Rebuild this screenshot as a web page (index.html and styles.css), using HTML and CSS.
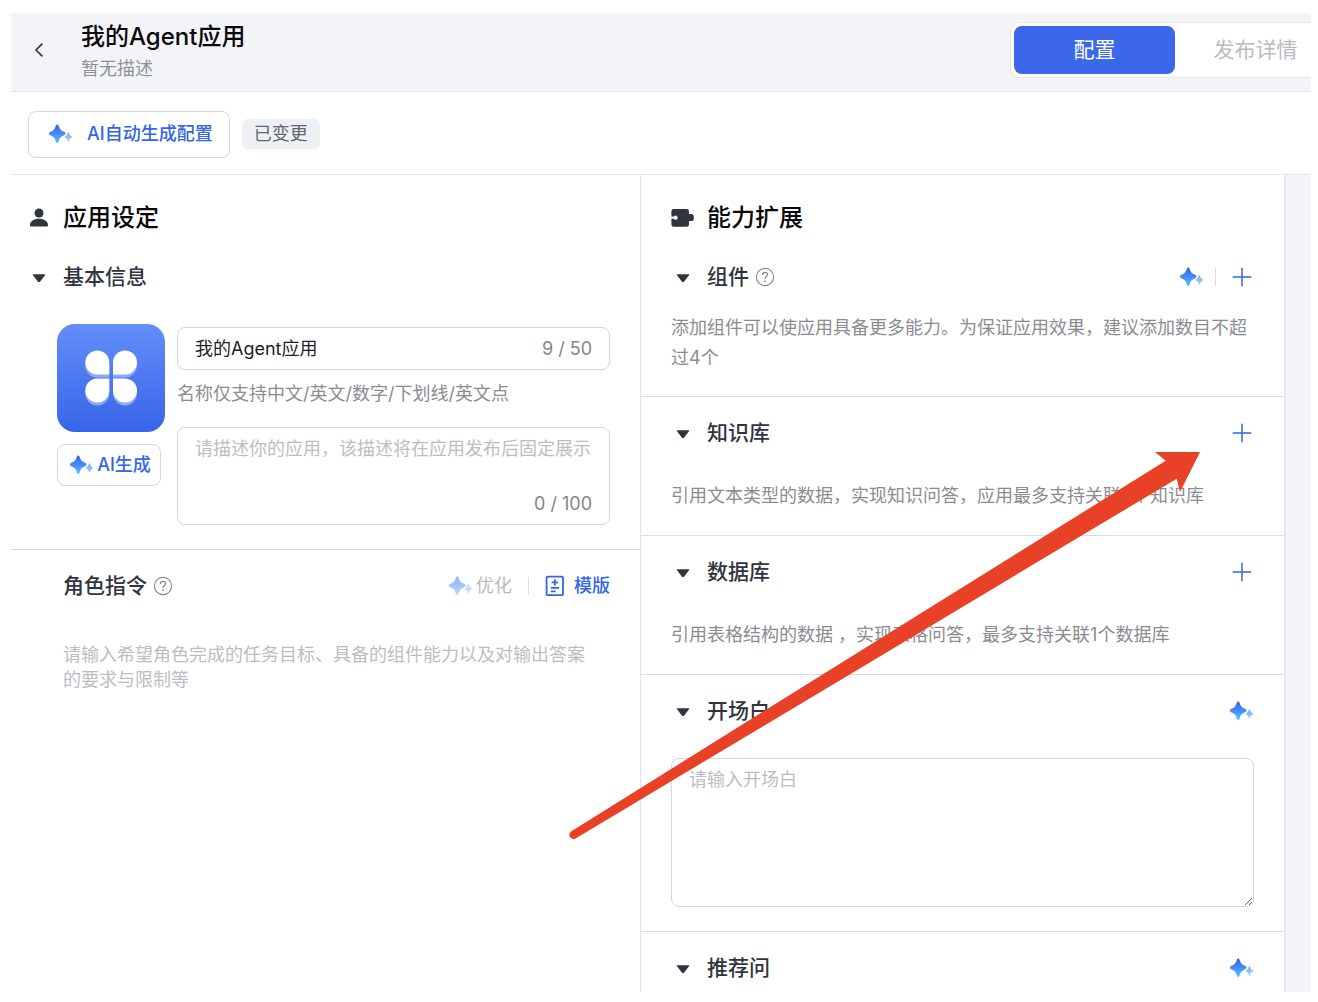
FILE: index.html
```html
<!DOCTYPE html>
<html lang="zh-CN">
<head>
<meta charset="utf-8">
<meta name="viewport" content="width=device-width, initial-scale=1">
<title>我的Agent应用</title>
<link rel="stylesheet" href="styles.css">
</head>
<body>
<svg class="sprite" aria-hidden="true">
  <defs>
    <linearGradient id="spark-big" x1="0" y1="0" x2="0" y2="1">
      <stop offset="0.1" stop-color="#3a66f0"/>
      <stop offset="0.55" stop-color="#4790fb"/>
      <stop offset="1" stop-color="#55c8fb"/>
    </linearGradient>
    <linearGradient id="spark-small" x1="0" y1="0" x2="0" y2="1">
      <stop offset="0" stop-color="#86a6f8"/>
      <stop offset="1" stop-color="#93d2fc"/>
    </linearGradient>
    <linearGradient id="tile-bg" x1="0" y1="0" x2="0" y2="1">
      <stop offset="0" stop-color="#628ef9"/>
      <stop offset="1" stop-color="#3765e9"/>
    </linearGradient>
  </defs>
  <symbol id="spark" viewBox="0 0 24 20">
    <path fill="url(#spark-big)" d="M8.2 0.4C9 .4 9.4 1 9.7 2C10.5 5 11.8 6.6 14.6 7.6C15.8 8.1 16.5 8.7 16.5 9.6C16.5 10.5 15.8 11.1 14.6 11.6C11.8 12.6 10.5 14.2 9.7 17.2C9.4 18.3 9 18.9 8.2 18.9C7.4 18.9 7 18.3 6.7 17.2C5.9 14.2 4.6 12.6 1.8 11.6C.6 11.1-.1 10.5-.1 9.6C-.1 8.7.6 8.1 1.8 7.6C4.6 6.6 5.9 5 6.7 2C7 1 7.4 .4 8.2 .4Z"/>
    <path fill="url(#spark-small)" d="M19.4 8.3C20 8.3 20.1 9 20.3 9.8C20.6 10.9 21.1 11.5 22.1 11.9C22.7 12.1 23.1 12.4 23.1 12.9C23.1 13.4 22.7 13.7 22.1 13.9C21.1 14.3 20.6 14.9 20.3 16C20.1 16.9 20 17.6 19.4 17.6C18.8 17.6 18.7 16.9 18.5 16C18.2 14.9 17.7 14.3 16.7 13.9C16.1 13.7 15.7 13.4 15.7 12.9C15.7 12.4 16.1 12.1 16.7 11.9C17.7 11.5 18.2 10.9 18.5 9.8C18.7 9 18.8 8.3 19.4 8.3Z"/>
  </symbol>
  <symbol id="plus" viewBox="0 0 20 20">
    <path d="M10 .7V19.3M.7 10H19.3" fill="none" stroke="#3465e8" stroke-width="1.5"/>
  </symbol>
  <symbol id="caret" viewBox="0 0 24 24">
    <path d="M6.3 9.2H17.7Q18.8 9.3 18 10.3L13 16.7Q12 17.6 11 16.7L6 10.3Q5.2 9.3 6.3 9.2Z" fill="#30343f"/>
  </symbol>
  <symbol id="help" viewBox="0 0 20 20">
    <circle cx="10" cy="10" r="8.6" fill="none" stroke="#84868c" stroke-width="1.1"/>
    <path d="M7.4 7.9C7.4 6.3 8.5 5.3 10 5.3C11.5 5.3 12.6 6.2 12.6 7.6C12.6 9.4 10 9.7 10 11.7V12" fill="none" stroke="#84868c" stroke-width="1.2"/>
    <circle cx="10" cy="14.2" r=".85" fill="#84868c"/>
  </symbol>
</svg>

<div class="app">
  <header class="topbar">
    <button class="icon-btn back" type="button" aria-label="返回">
      <svg width="12" height="16" viewBox="0 0 12 16"><path d="M9.4 1.6L3 8L9.4 14.4" fill="none" stroke="#30343f" stroke-width="1.6"/></svg>
    </button>
    <div class="identity">
      <h1 class="app-name">我的Agent应用</h1>
      <p class="app-desc">暂无描述</p>
    </div>
    <nav class="tabs">
      <button class="tab tab-active" type="button">配置</button>
      <button class="tab" type="button">发布详情</button>
    </nav>
  </header>

  <div class="toolbar">
    <button class="outline-btn generate" type="button"><svg class="spark"><use href="#spark"/></svg>AI自动生成配置</button>
    <span class="badge">已变更</span>
  </div>

  <main class="columns">
    <section class="column settings">
      <h2 class="row column-title">
        <svg class="lead" viewBox="0 0 24 24"><circle cx="12" cy="7" r="4.5" fill="#30343f"/><path d="M3 19.2C3 15.4 7 12.8 12 12.8C17 12.8 21 15.4 21 19.2Q21 20.4 19.8 20.4H4.2Q3 20.4 3 19.2Z" fill="#30343f"/></svg>
        应用设定
      </h2>
      <div class="panel first">
        <h3 class="row panel-title"><svg class="lead"><use href="#caret"/></svg>基本信息</h3>
        <div class="profile">
          <div class="avatar">
            <svg class="tile" viewBox="0 0 108 108" role="img" aria-label="应用图标">
              <rect width="108" height="108" rx="18" fill="url(#tile-bg)"/>
              <g fill="#8fabf4">
                <path d="M52.3 53.5H40.3A12 12 0 0 1 28.3 41.5A12 12 0 0 1 52.3 41.5Z"/>
                <path d="M56 53.5H68A12 12 0 0 0 80 41.5A12 12 0 0 0 56 41.5Z"/>
                <path d="M52.3 57.7V69.6A12 12 0 0 1 28.3 69.6A12 12 0 0 1 40.3 57.7Z"/>
                <path d="M56 57.7V69.6A12 12 0 0 0 80 69.6A12 12 0 0 0 68 57.7Z"/>
              </g>
              <g fill="#fff">
                <path d="M52.3 50.5H40.3A12 12 0 0 1 28.3 38.5A12 12 0 0 1 52.3 38.5Z"/>
                <path d="M56 50.5H68A12 12 0 0 0 80 38.5A12 12 0 0 0 56 38.5Z"/>
                <path d="M52.3 54.5V66.5A12 12 0 0 1 28.3 66.5A12 12 0 0 1 40.3 54.5Z"/>
                <path d="M56 54.5V66.5A12 12 0 0 0 80 66.5A12 12 0 0 0 68 54.5Z"/>
              </g>
            </svg>
            <button class="outline-btn avatar-btn" type="button"><svg class="spark"><use href="#spark"/></svg>AI生成</button>
          </div>
          <div class="fields">
            <div class="field name-field">
              <input class="control" type="text" value="我的Agent应用" aria-label="应用名称">
              <span class="count">9 / 50</span>
            </div>
            <p class="hint">名称仅支持中文/英文/数字/下划线/英文点</p>
            <div class="field desc-field">
              <textarea class="control" aria-label="应用描述" placeholder="请描述你的应用，该描述将在应用发布后固定展示"></textarea>
              <span class="count">0 / 100</span>
            </div>
          </div>
        </div>
      </div>
      <div class="panel role">
        <div class="row role-head">
          <h3 class="panel-title">角色指令</h3>
          <svg class="help"><use href="#help"/></svg>
          <div class="actions">
            <button class="text-btn muted" type="button" disabled><svg class="spark"><use href="#spark"/></svg>优化</button>
            <span class="sep"></span>
            <button class="text-btn template" type="button">
              <svg width="20" height="22" viewBox="0 0 20 22" fill="none" stroke="#3465e8" stroke-width="1.8"><rect x="1.6" y="1.6" width="16.4" height="18.6" rx="1"/><path d="M6.6 7.4H13.2M9.9 4.2V10.6M5.8 12.9H14M5.8 16.3H10.6"/></svg>模版
            </button>
          </div>
        </div>
        <textarea class="control role-input" aria-label="角色指令" placeholder="请输入希望角色完成的任务目标、具备的组件能力以及对输出答案的要求与限制等"></textarea>
      </div>
    </section>

    <section class="column abilities">
      <h2 class="row column-title">
        <svg class="lead" viewBox="0 0 24 24"><path d="M2.6 3H15.6Q18 3 18 5.4V8H20.2Q22.8 8 22.8 10.6V12.4Q22.8 15 20.2 15H18V18.4Q18 20.8 15.6 20.8H2.6Q.4 20.8 .4 18.6V12.8H3A2 2 0 1 0 3 10.6H.4V5.2Q.4 3 2.6 3Z" fill="#30343f"/></svg>
        能力扩展
      </h2>
      <div class="panel first">
        <div class="row">
          <svg class="lead"><use href="#caret"/></svg>
          <h3 class="panel-title">组件</h3>
          <svg class="help"><use href="#help"/></svg>
          <div class="actions">
            <button class="icon-btn" type="button" aria-label="AI生成组件"><svg class="spark"><use href="#spark"/></svg></button>
            <span class="sep"></span>
            <button class="icon-btn" type="button" aria-label="添加组件"><svg class="plus"><use href="#plus"/></svg></button>
          </div>
        </div>
        <p class="note note-near">添加组件可以使应用具备更多能力。为保证应用效果，建议添加数目不超过4个</p>
      </div>
      <div class="panel">
        <div class="row">
          <svg class="lead"><use href="#caret"/></svg>
          <h3 class="panel-title">知识库</h3>
          <div class="actions"><button class="icon-btn" type="button" aria-label="添加知识库"><svg class="plus"><use href="#plus"/></svg></button></div>
        </div>
        <p class="note">引用文本类型的数据，实现知识问答，应用最多支持关联5个知识库</p>
      </div>
      <div class="panel">
        <div class="row">
          <svg class="lead"><use href="#caret"/></svg>
          <h3 class="panel-title">数据库</h3>
          <div class="actions"><button class="icon-btn" type="button" aria-label="添加数据库"><svg class="plus"><use href="#plus"/></svg></button></div>
        </div>
        <p class="note">引用表格结构的数据 ，实现表格问答，最多支持关联1个数据库</p>
      </div>
      <div class="panel">
        <div class="row">
          <svg class="lead"><use href="#caret"/></svg>
          <h3 class="panel-title">开场白</h3>
          <div class="actions"><button class="icon-btn" type="button" aria-label="AI生成开场白"><svg class="spark"><use href="#spark"/></svg></button></div>
        </div>
        <textarea class="field control opening" aria-label="开场白" placeholder="请输入开场白"></textarea>
      </div>
      <div class="panel last">
        <div class="row">
          <svg class="lead"><use href="#caret"/></svg>
          <h3 class="panel-title">推荐问</h3>
          <div class="actions"><button class="icon-btn" type="button" aria-label="AI生成推荐问"><svg class="spark"><use href="#spark"/></svg></button></div>
        </div>
      </div>
    </section>
    <aside class="gutter"></aside>
  </main>
</div>

<svg class="arrow" width="632" height="390" viewBox="568 450 632 390" aria-hidden="true">
  <path d="M571 831.4L1165.7 460.7L1155 452H1200L1180 492L1176.7 478.7L576 838.2A4.2 4.2 0 0 1 571 831.4Z" fill="#e94127"/>
</svg>
</body>
</html>
```
FILE: styles.css
```css
* {
  box-sizing: border-box;
}

body {
  position: relative;
  margin: 0;
  padding: 13px 7px 10px 11px;
  min-height: 100vh;
  display: flex;
  background: #fff;
  color: #30343f;
  font: 400 18px/30px Inter, "Noto Sans CJK SC", sans-serif;
}

h1, h2, h3, p {
  margin: 0;
  font-weight: 500;
}

p {
  font-weight: 400;
}

button, input, textarea {
  font: inherit;
  color: inherit;
}

button {
  padding: 0;
  border: 0;
  background: none;
}

svg {
  flex: none;
  display: block;
}

.sprite {
  position: absolute;
  width: 0;
  height: 0;
}

.app {
  flex: 1;
  min-width: 0;
  display: flex;
  flex-direction: column;
  overflow: hidden;
}

/* Top bar */
.topbar {
  display: flex;
  align-items: flex-start;
  height: 79px;
  padding: 9px 0 0 22px;
  background: #f3f4f8;
  border-bottom: 1px solid #e4e5e8;
}

.back {
  padding: 20px 0;
}

.identity {
  flex: 1;
  padding-left: 36px;
}

.app-name {
  font-size: 24px;
  line-height: 30px;
  color: #0a0a0c;
}

.app-desc {
  line-height: 34px;
  color: #8f9197;
}

.tabs {
  display: flex;
  margin-right: -29px;
  padding: 3px;
  background: #fff;
  border: 1px solid #e6e7ea;
  border-radius: 10px;
}

.tab {
  width: 161px;
  height: 48px;
  border-radius: 8px;
  font-size: 21px;
  color: #b9bbc1;
}

.tab-active {
  background: #3a68e9;
  color: #fff;
}

/* Toolbar */
.toolbar {
  display: flex;
  align-items: center;
  gap: 12px;
  height: 83px;
  padding: 2px 0 0 17px;
  border-bottom: 1px solid #e6e7ea;
}

.outline-btn {
  display: flex;
  align-items: center;
  justify-content: center;
  background: #fff;
  border: 1px solid #d5d7dc;
  border-radius: 8px;
  color: #3465e8;
  font-weight: 500;
}

.generate {
  height: 47px;
  padding: 0 16px 0 20px;
  gap: 14px;
}

.badge {
  padding: 0 12px;
  background: #edf0f5;
  border-radius: 6px;
  color: #63666c;
}

/* Columns */
.columns {
  flex: 1;
  display: grid;
  grid-template-columns: minmax(0, 630fr) minmax(0, 645fr) 25px;
}

.column {
  display: flex;
  flex-direction: column;
  padding-top: 28px;
}

.settings {
  border-right: 1px solid #e2e3e6;
}

.abilities {
  border-right: 2px solid #e8e9ef;
}

.gutter {
  background: #f3f4f8;
}

.row {
  display: flex;
  align-items: center;
  height: 30px;
}

.lead {
  width: 24px;
  height: 24px;
  margin-right: 12px;
}

.column-title {
  font-size: 24px;
  color: #0a0a0c;
}

.panel-title {
  font-size: 21px;
}

.settings .column-title,
.settings .panel {
  padding-left: 16px;
}

.abilities .column-title,
.abilities .panel {
  padding-left: 30px;
}

.panel {
  padding: 21px 30px 24px 0;
  border-bottom: 1px solid #dcdde1;
}

.first {
  padding-top: 29px;
}

.abilities .first {
  padding-bottom: 23px;
}

.last {
  padding-bottom: 8px;
  border-bottom: 0;
}

.note {
  margin-top: 33px;
  color: #8a8c92;
}

.note-near {
  margin-top: 21px;
}

.help {
  width: 20px;
  height: 20px;
  margin-left: 6px;
}

.actions {
  display: flex;
  align-items: center;
  margin-left: auto;
}

.spark {
  width: 24px;
  height: 20px;
}

.plus {
  width: 20px;
  height: 20px;
  margin-right: 2px;
}

.sep {
  width: 1px;
  height: 18px;
  margin: 0 16px 0 11px;
  background: #dcdde1;
}

/* Basic information */
.profile {
  display: flex;
  gap: 12px;
  margin: 32px 0 0 30px;
}

.tile {
  width: 108px;
  height: 108px;
}

.avatar-btn {
  width: 104px;
  height: 42px;
  margin-top: 12px;
  padding-left: 3px;
  gap: 3px;
}

.fields {
  flex: 1;
  min-width: 0;
  padding-top: 3px;
}

.field {
  display: flex;
  border: 1px solid #d5d7dc;
  border-radius: 8px;
  padding: 0 17px;
}

.name-field {
  align-items: center;
  height: 43px;
}

.desc-field {
  flex-direction: column;
  height: 98px;
  padding-top: 6px;
  padding-bottom: 5px;
}

.control {
  flex: 1;
  min-width: 0;
  min-height: 0;
  background: none;
  outline: 0;
  resize: none;
}

.control:not(.field) {
  padding: 0;
  border: 0;
}

.name-field .control {
  color: #1d212b;
}

.control::placeholder {
  color: #bbbdc3;
}

.count {
  align-self: flex-end;
  color: #84868c;
}

.name-field .count {
  align-self: center;
}

.hint {
  margin: 9px 0 18px;
  color: #8a8c92;
}

/* Role instruction */
.role {
  flex: 1;
  display: flex;
  flex-direction: column;
  border-bottom: 0;
}

.role-head {
  padding-left: 36px;
}

.text-btn {
  display: flex;
  align-items: center;
  color: #3465e8;
  font-weight: 500;
}

.muted {
  gap: 3px;
  color: #b9bbc1;
  font-weight: 400;
}

.muted .spark {
  opacity: 0.5;
}

.role .sep {
  margin-left: 16px;
}

.template {
  gap: 9px;
}

.role-input {
  margin: 41px 16px 0 36px;
  line-height: 25px;
}

/* Opening line */
.opening {
  display: block;
  width: 100%;
  height: 149px;
  margin-top: 32px;
  padding-top: 6px;
  resize: vertical;
}

/* Annotation laid over the page */
.arrow {
  position: absolute;
  left: 568px;
  top: 450px;
  pointer-events: none;
}
```
